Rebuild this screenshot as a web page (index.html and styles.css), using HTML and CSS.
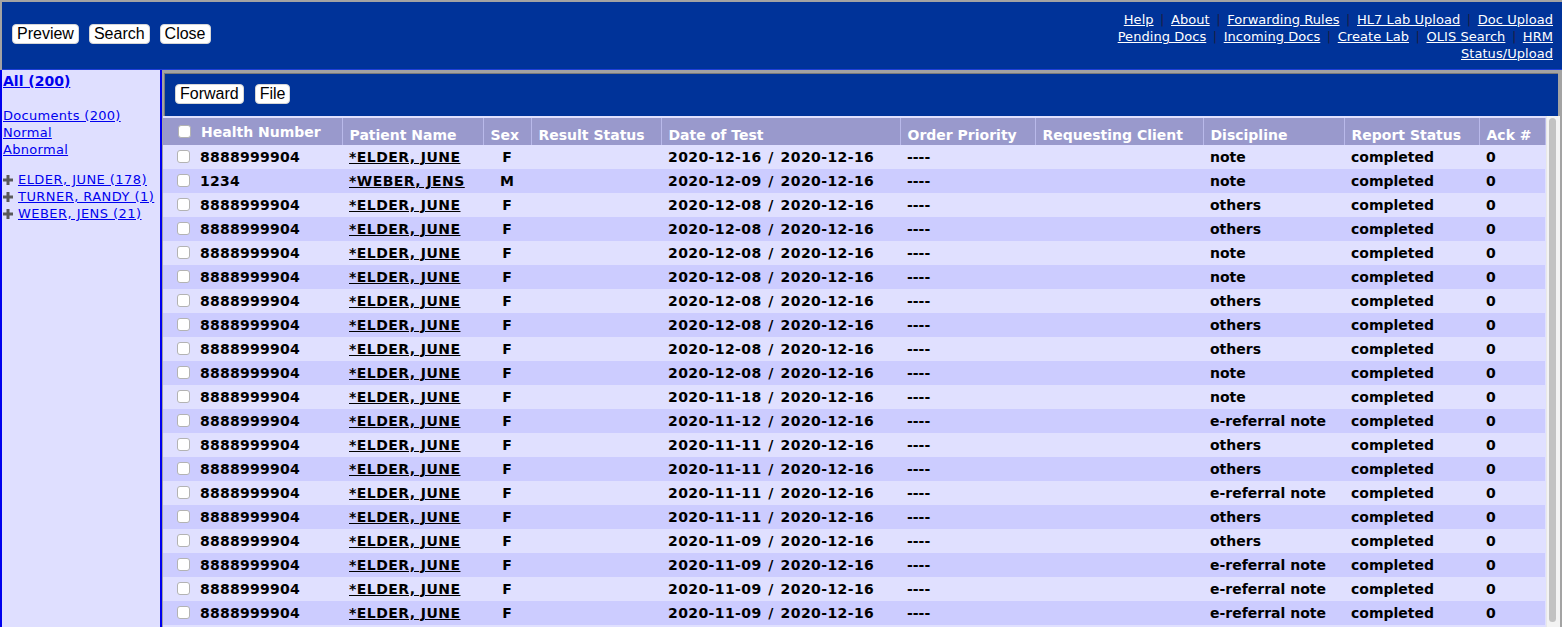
FILE: index.html
```html
<!DOCTYPE html>
<html>
<head>
<meta charset="utf-8">
<title>Inbox</title>
<link rel="stylesheet" href="styles.css">
</head>
<body>
<header class="topbar">
  <div class="actions">
    <button class="btn">Preview</button>
    <button class="btn">Search</button>
    <button class="btn">Close</button>
  </div>
  <nav class="toplinks">
    <a href="#">Help</a><span class="sep">|</span><a href="#">About</a><span class="sep">|</span><a href="#">Forwarding Rules</a><span class="sep">|</span><a href="#">HL7 Lab Upload</a><span class="sep">|</span><a href="#">Doc Upload</a><br>
    <a href="#">Pending Docs</a><span class="sep">|</span><a href="#">Incoming Docs</a><span class="sep">|</span><a href="#">Create Lab</a><span class="sep">|</span><a href="#">OLIS Search</a><span class="sep">|</span><a href="#">HRM<br>Status/Upload</a>
  </nav>
</header>
<div class="layout">
  <aside class="sidebar">
    <a class="all" href="#">All (200)</a>
    <div class="filters">
      <a href="#">Documents (200)</a>
      <a href="#">Normal</a>
      <a href="#">Abnormal</a>
    </div>
    <div class="patients">
      <div class="patient"><svg class="plus" viewBox="0 0 10 10" width="10" height="10"><rect x="0" y="3.5" width="10" height="3" fill="#5a5a5a"/><rect x="3.5" y="0" width="3" height="10" fill="#5a5a5a"/></svg><a href="#">ELDER, JUNE (178)</a></div>
      <div class="patient"><svg class="plus" viewBox="0 0 10 10" width="10" height="10"><rect x="0" y="3.5" width="10" height="3" fill="#5a5a5a"/><rect x="3.5" y="0" width="3" height="10" fill="#5a5a5a"/></svg><a href="#">TURNER, RANDY (1)</a></div>
      <div class="patient"><svg class="plus" viewBox="0 0 10 10" width="10" height="10"><rect x="0" y="3.5" width="10" height="3" fill="#5a5a5a"/><rect x="3.5" y="0" width="3" height="10" fill="#5a5a5a"/></svg><a href="#">WEBER, JENS (21)</a></div>
    </div>
  </aside>
  <main class="main">
    <div class="toolbar">
      <button class="btn">Forward</button>
      <button class="btn">File</button>
    </div>
    <div class="listing">
      <div class="tablewrap">
        <table class="docs">
          <colgroup>
            <col class="c-hn"><col class="c-pn"><col class="c-sex"><col class="c-rs"><col class="c-date"><col class="c-op"><col class="c-rc"><col class="c-disc"><col class="c-rep"><col class="c-ack">
          </colgroup>
          <thead>
            <tr>
              <th class="first"><input type="checkbox" class="cb">Health Number</th>
              <th>Patient Name</th>
              <th>Sex</th>
              <th>Result Status</th>
              <th>Date of Test</th>
              <th>Order Priority</th>
              <th>Requesting Client</th>
              <th>Discipline</th>
              <th>Report Status</th>
              <th>Ack #</th>
            </tr>
          </thead>
          <tbody>
            <tr><td class="first"><input type="checkbox" class="cb">8888999904</td><td class="name"><a href="#">*ELDER, JUNE</a></td><td class="center">F</td><td></td><td class="date">2020-12-16 / 2020-12-16</td><td>----</td><td></td><td>note</td><td>completed</td><td>0</td></tr>
            <tr><td class="first"><input type="checkbox" class="cb">1234</td><td class="name"><a href="#">*WEBER, JENS</a></td><td class="center">M</td><td></td><td class="date">2020-12-09 / 2020-12-16</td><td>----</td><td></td><td>note</td><td>completed</td><td>0</td></tr>
            <tr><td class="first"><input type="checkbox" class="cb">8888999904</td><td class="name"><a href="#">*ELDER, JUNE</a></td><td class="center">F</td><td></td><td class="date">2020-12-08 / 2020-12-16</td><td>----</td><td></td><td>others</td><td>completed</td><td>0</td></tr>
            <tr><td class="first"><input type="checkbox" class="cb">8888999904</td><td class="name"><a href="#">*ELDER, JUNE</a></td><td class="center">F</td><td></td><td class="date">2020-12-08 / 2020-12-16</td><td>----</td><td></td><td>others</td><td>completed</td><td>0</td></tr>
            <tr><td class="first"><input type="checkbox" class="cb">8888999904</td><td class="name"><a href="#">*ELDER, JUNE</a></td><td class="center">F</td><td></td><td class="date">2020-12-08 / 2020-12-16</td><td>----</td><td></td><td>note</td><td>completed</td><td>0</td></tr>
            <tr><td class="first"><input type="checkbox" class="cb">8888999904</td><td class="name"><a href="#">*ELDER, JUNE</a></td><td class="center">F</td><td></td><td class="date">2020-12-08 / 2020-12-16</td><td>----</td><td></td><td>note</td><td>completed</td><td>0</td></tr>
            <tr><td class="first"><input type="checkbox" class="cb">8888999904</td><td class="name"><a href="#">*ELDER, JUNE</a></td><td class="center">F</td><td></td><td class="date">2020-12-08 / 2020-12-16</td><td>----</td><td></td><td>others</td><td>completed</td><td>0</td></tr>
            <tr><td class="first"><input type="checkbox" class="cb">8888999904</td><td class="name"><a href="#">*ELDER, JUNE</a></td><td class="center">F</td><td></td><td class="date">2020-12-08 / 2020-12-16</td><td>----</td><td></td><td>others</td><td>completed</td><td>0</td></tr>
            <tr><td class="first"><input type="checkbox" class="cb">8888999904</td><td class="name"><a href="#">*ELDER, JUNE</a></td><td class="center">F</td><td></td><td class="date">2020-12-08 / 2020-12-16</td><td>----</td><td></td><td>others</td><td>completed</td><td>0</td></tr>
            <tr><td class="first"><input type="checkbox" class="cb">8888999904</td><td class="name"><a href="#">*ELDER, JUNE</a></td><td class="center">F</td><td></td><td class="date">2020-12-08 / 2020-12-16</td><td>----</td><td></td><td>note</td><td>completed</td><td>0</td></tr>
            <tr><td class="first"><input type="checkbox" class="cb">8888999904</td><td class="name"><a href="#">*ELDER, JUNE</a></td><td class="center">F</td><td></td><td class="date">2020-11-18 / 2020-12-16</td><td>----</td><td></td><td>note</td><td>completed</td><td>0</td></tr>
            <tr><td class="first"><input type="checkbox" class="cb">8888999904</td><td class="name"><a href="#">*ELDER, JUNE</a></td><td class="center">F</td><td></td><td class="date">2020-11-12 / 2020-12-16</td><td>----</td><td></td><td>e-referral note</td><td>completed</td><td>0</td></tr>
            <tr><td class="first"><input type="checkbox" class="cb">8888999904</td><td class="name"><a href="#">*ELDER, JUNE</a></td><td class="center">F</td><td></td><td class="date">2020-11-11 / 2020-12-16</td><td>----</td><td></td><td>others</td><td>completed</td><td>0</td></tr>
            <tr><td class="first"><input type="checkbox" class="cb">8888999904</td><td class="name"><a href="#">*ELDER, JUNE</a></td><td class="center">F</td><td></td><td class="date">2020-11-11 / 2020-12-16</td><td>----</td><td></td><td>others</td><td>completed</td><td>0</td></tr>
            <tr><td class="first"><input type="checkbox" class="cb">8888999904</td><td class="name"><a href="#">*ELDER, JUNE</a></td><td class="center">F</td><td></td><td class="date">2020-11-11 / 2020-12-16</td><td>----</td><td></td><td>e-referral note</td><td>completed</td><td>0</td></tr>
            <tr><td class="first"><input type="checkbox" class="cb">8888999904</td><td class="name"><a href="#">*ELDER, JUNE</a></td><td class="center">F</td><td></td><td class="date">2020-11-11 / 2020-12-16</td><td>----</td><td></td><td>others</td><td>completed</td><td>0</td></tr>
            <tr><td class="first"><input type="checkbox" class="cb">8888999904</td><td class="name"><a href="#">*ELDER, JUNE</a></td><td class="center">F</td><td></td><td class="date">2020-11-09 / 2020-12-16</td><td>----</td><td></td><td>others</td><td>completed</td><td>0</td></tr>
            <tr><td class="first"><input type="checkbox" class="cb">8888999904</td><td class="name"><a href="#">*ELDER, JUNE</a></td><td class="center">F</td><td></td><td class="date">2020-11-09 / 2020-12-16</td><td>----</td><td></td><td>e-referral note</td><td>completed</td><td>0</td></tr>
            <tr><td class="first"><input type="checkbox" class="cb">8888999904</td><td class="name"><a href="#">*ELDER, JUNE</a></td><td class="center">F</td><td></td><td class="date">2020-11-09 / 2020-12-16</td><td>----</td><td></td><td>e-referral note</td><td>completed</td><td>0</td></tr>
            <tr><td class="first"><input type="checkbox" class="cb">8888999904</td><td class="name"><a href="#">*ELDER, JUNE</a></td><td class="center">F</td><td></td><td class="date">2020-11-09 / 2020-12-16</td><td>----</td><td></td><td>e-referral note</td><td>completed</td><td>0</td></tr>
          </tbody>
        </table>
      </div>
      <div class="scrollbar"><div class="thumb"></div></div>
    </div>
  </main>
</div>
</body>
</html>
```
FILE: styles.css
```css
html, body {
  margin: 0;
  height: 100%;
}
body {
  background: #a3a3a3;
  font-family: "DejaVu Sans", Verdana, sans-serif;
  overflow: hidden;
  display: flex;
  flex-direction: column;
}

/* top bar */
.topbar {
  margin: 2px 0 0 2px;
  height: 67px;
  background: #003399;
  border-bottom: 1px solid #1e3fd8;
  display: flex;
  align-items: center;
  justify-content: space-between;
  padding: 0 9px 0 10px;
  flex: none;
}
.actions {
  display: flex;
  gap: 10px;
  margin-bottom: 3px;
}
.btn {
  font-family: "Liberation Sans", Arial, sans-serif;
  font-size: 16px;
  line-height: 18px;
  height: 20px;
  padding: 0 4px;
  margin: 0;
  background: #fff;
  color: #000;
  border: 1px solid #d6d6d6;
  border-radius: 4px;
}
.toplinks {
  text-align: right;
  font-size: 13px;
  line-height: 17px;
  color: #fff;
  padding-top: 2px;
  letter-spacing: 0.05px;
}
.toplinks a {
  color: #fff;
  text-decoration: underline;
}
.sep {
  color: #1c1c44;
  margin: 0 6.5px;
}

/* layout */
.layout {
  flex: 1;
  display: flex;
  min-height: 0;
}

/* sidebar */
.sidebar {
  width: 157px;
  flex: none;
  background: #dfdfff;
  border-left: 2px solid #0000ee;
  border-right: 2px solid #0000ee;
  padding: 3px 0 0 1px;
  font-size: 13px;
  line-height: 17px;
  letter-spacing: 0.3px;
}
.sidebar a {
  color: #0000ee;
  text-decoration: underline;
}
.sidebar .all {
  display: block;
  font-weight: bold;
  font-size: 14px;
  letter-spacing: 0;
}
.filters {
  margin-top: 17px;
  display: flex;
  flex-direction: column;
  align-items: flex-start;
}
.patients {
  margin-top: 13px;
}
.patient {
  display: flex;
  align-items: center;
  gap: 5px;
}
.patient a {
  letter-spacing: 0.45px;
}
.plus {
  flex: none;
}

/* main */
.main {
  flex: 1;
  min-width: 0;
  display: flex;
  flex-direction: column;
  background: #a3a3a3;
}
.toolbar {
  margin: 3px 4px 0 2px;
  border-top: 1px solid #7a7a7a;
  border-left: 1px solid #7a7a7a;
  height: 43px;
  box-sizing: border-box;
  background: #003399;
  display: flex;
  align-items: flex-start;
  gap: 11px;
  padding: 10px 0 0 10px;
  flex: none;
}
.listing {
  flex: 1;
  min-height: 0;
  display: flex;
  margin: 0 2px 0 1px;
  padding-top: 2px;
  background: #e0e0ff;
  overflow: hidden;
}
.tablewrap {
  flex: 1;
  min-width: 0;
}
.scrollbar {
  width: 14px;
  flex: none;
  box-sizing: border-box;
  background: #f3f3f3;
  border-left: 1px solid #e8e8e8;
  padding: 2px 4px 5px 2px;
  margin-top: -2px;
}
.thumb {
  height: 100%;
  background: #c2c2c2;
  border-radius: 5px;
}

/* table */
.docs {
  width: 1382px;
  table-layout: fixed;
  border-collapse: collapse;
  font-size: 14px;
  font-weight: bold;
}
.c-hn { width: 179px; }
.c-pn { width: 141px; }
.c-sex { width: 48px; }
.c-rs { width: 130px; }
.c-date { width: 239px; }
.c-op { width: 135px; }
.c-rc { width: 168px; }
.c-disc { width: 141px; }
.c-rep { width: 135px; }
.c-ack { width: 66px; }

.docs th {
  background: #9999cc;
  color: #fff;
  text-align: left;
  vertical-align: top;
  line-height: 17px;
  padding: 9px 7px 1px 7px;
  border-right: 1px solid #b9b9ea;
  white-space: nowrap;
  overflow: hidden;
}
.docs th.first {
  padding: 6px 7px 4px 15px;
}
.docs td {
  height: 24px;
  line-height: 24px;
  padding: 0 7px;
  color: #000;
  white-space: nowrap;
  overflow: hidden;
}
.docs td.first {
  padding-left: 14px;
  letter-spacing: 0.25px;
}
.docs td.center {
  text-align: center;
}
.docs td.name {
  letter-spacing: 0.45px;
}
.docs td.date {
  letter-spacing: 0.4px;
  word-spacing: 1.5px;
}
.docs tbody tr:nth-child(odd) td {
  background: #e0e0ff;
}
.docs tbody tr:nth-child(even) td {
  background: #ccccff;
}
.docs td a {
  color: #000;
  text-decoration: underline;
}
.cb {
  appearance: none;
  -webkit-appearance: none;
  width: 13px;
  height: 13px;
  margin: 0 10px 0 0;
  border: 1px solid #b3b3b3;
  border-radius: 3px;
  background: #fff;
  vertical-align: -1px;
  box-sizing: border-box;
}
```
